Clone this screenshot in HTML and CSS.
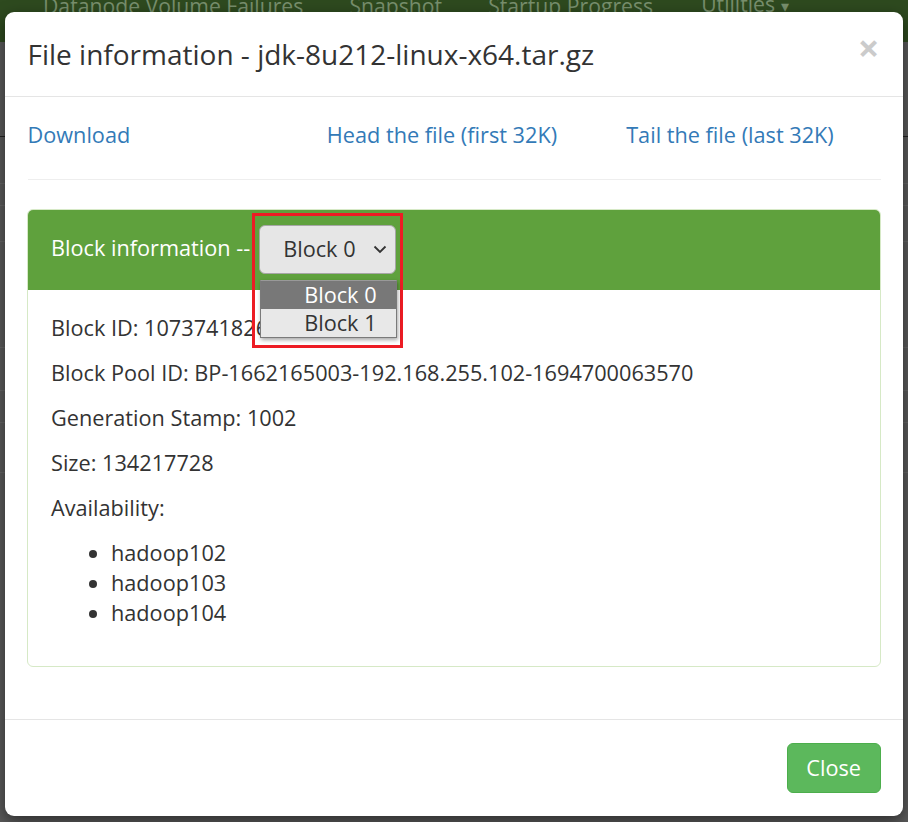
FILE: index.html
```html
<!DOCTYPE html>
<html lang="en">
<head>
<meta charset="utf-8">
<title>File information</title>
<link rel="stylesheet" href="styles.css">
</head>
<body>
<div class="page">
  <nav class="navbar">
    <span class="nav-item nav-first">Datanode Volume Failures</span>
    <span class="nav-item nav-snap">Snapshot</span>
    <span class="nav-item nav-startup">Startup Progress</span>
    <span class="nav-item nav-util">Utilities <span class="caret">▾</span></span>
  </nav>
  <div class="page-body">
    <div class="bg-row r1"></div>
    <div class="bg-row r2"></div>
    <div class="bg-row r3"></div>
    <div class="bg-row r4"></div>
    <div class="bg-row r5"></div>
    <div class="bg-row r6"></div>
    <div class="bg-row r7"></div>
    <div class="bg-row r8"></div>
  </div>
</div>

<div class="modal">
  <div class="modal-header">
    <h4 class="modal-title">File information - jdk-8u212-linux-x64.tar.gz</h4>
    <span class="close">×</span>
  </div>
  <div class="modal-body">
    <div class="links">
      <a class="link">Download</a>
      <a class="link">Head the file (first 32K)</a>
      <a class="link">Tail the file (last 32K)</a>
    </div>
    <hr class="divider">
    <div class="panel">
      <div class="panel-heading">
        <span class="heading-text">Block information --</span>
        <div class="select-wrap">
          <div class="select">
            <span>Block 0</span>
            <svg class="chev" width="14" height="9" viewBox="0 0 14 9"><path d="M1.5 1.5 L7 7 L12.5 1.5" fill="none" stroke="#333" stroke-width="1.8"/></svg>
          </div>
          <div class="options">
            <div class="option selected">Block 0</div>
            <div class="option">Block 1</div>
          </div>
        </div>
      </div>
      <div class="panel-body">
        <p>Block ID: 1073741826</p>
        <p>Block Pool ID: BP-1662165003-192.168.255.102-1694700063570</p>
        <p>Generation Stamp: 1002</p>
        <p>Size: 134217728</p>
        <p>Availability:</p>
        <ul class="hosts">
          <li>hadoop102</li>
          <li>hadoop103</li>
          <li>hadoop104</li>
        </ul>
      </div>
    </div>
  </div>
  <div class="modal-footer">
    <button class="btn-close">Close</button>
  </div>
</div>
<div class="annotation"></div>
</body>
</html>
```

FILE: styles.css
```css
* { box-sizing: border-box; }
html, body { margin: 0; padding: 0; }
body {
  width: 908px;
  height: 822px;
  overflow: hidden;
  background: #5a5a5a;
  font-family: "Open Sans", "Noto Sans", sans-serif;
  color: #333;
  position: relative;
}
.page { width: 908px; height: 822px; }
.navbar {
  height: 42px;
  background: #2e4a1f;
  display: flex;
  align-items: flex-end;
  font-size: 21.2px;
  line-height: 30px;
  color: #788f6d;
  overflow: hidden;
}
.nav-item { display: block; margin-bottom: 21px; white-space: nowrap; }
.nav-first { margin-left: 43px; }
.nav-snap { margin-left: 46px; }
.nav-startup { margin-left: 46px; }
.nav-util { margin-left: 48px; }
.caret { font-size: 16px; }
.page-body { display: flex; flex-direction: column; }
.bg-row { border-bottom: 1px solid #666; }
.r1 { height: 95px; border-bottom-color: #222; }
.r2 { height: 47px; }
.r3 { height: 22px; }
.r4 { height: 36px; }
.r5 { height: 106px; }
.r6 { height: 43px; }
.r7 { height: 32px; }
.r8 { height: 50px; }

.modal {
  position: absolute;
  top: 12px;
  left: 5px;
  width: 898px;
  background: #fff;
  border-radius: 9px;
  box-shadow: 0 5px 15px rgba(0,0,0,0.5);
}
.modal-header {
  display: flex;
  justify-content: space-between;
  align-items: flex-start;
  padding: 23px 22.5px 22px;
  border-bottom: 1.5px solid #e5e5e5;
}
.modal-title {
  margin: 0;
  font-size: 28px;
  line-height: 39px;
  font-weight: 400;
  color: #333;
}
.close {
  font-size: 38px;
  font-weight: 700;
  line-height: 30px;
  color: #000;
  opacity: 0.2;
  margin-top: -3px;
  margin-right: 1px;
}
.modal-body { padding: 22.5px; }
.links {
  display: grid;
  grid-template-columns: repeat(3, 1fr);
  margin: 0 -22.5px;
  font-size: 21.7px;
  line-height: 30px;
}
.link { padding: 0 22.5px; color: #337ab7; text-decoration: none; }
.divider {
  border: 0;
  border-top: 1.5px solid #eee;
  margin: 29px 0 29.5px;
}
.panel {
  border: 1.5px solid #d6e9c6;
  border-radius: 6px;
  margin-bottom: 30px;
  margin-left: -1px;
  font-size: 21.7px;
  line-height: 30px;
}
.panel-heading {
  background: #5fa13d;
  color: #fff;
  padding: 14.5px 22.5px 16px 23.5px;
  border-radius: 5px 5px 0 0;
  display: flex;
  align-items: center;
}
.heading-text { margin-top: -3px; }
.select-wrap { position: relative; margin-left: 9px; }
.select {
  width: 137px;
  height: 49px;
  background: #e6e6e6;
  border: 1px solid #a6a6a6;
  border-radius: 6px;
  color: #333;
  display: flex;
  align-items: center;
  padding-left: 23px;
  padding-right: 6px;
  justify-content: space-between;
}
.chev { margin-right: 2px; }
.options {
  position: absolute;
  top: 55px;
  left: 1px;
  width: 137px;
  background: #e8e8e8;
  border: 1px solid #7a7a7a;
  border-top-color: #999;
  box-shadow: 1px 2px 4px rgba(0,0,0,0.35);
  color: #333;
  z-index: 2;
}
.option { height: 28px; line-height: 28px; padding-left: 43px; }
.option.selected { background: #787878; color: #fff; }
.panel-body { padding: 23px 22.5px 23px 23.5px; }
.panel-body p { margin: 0 0 15px; }
.hosts { margin: 0 0 15px; padding-left: 60px; }
.modal-footer {
  border-top: 1.5px solid #e5e5e5;
  padding: 22.5px 22.5px 23.5px;
  display: flex;
  justify-content: flex-end;
}
.btn-close {
  font-family: inherit;
  font-size: 21.7px;
  line-height: 30px;
  padding: 9px 18.5px;
  color: #fff;
  background: #5cb85c;
  border: 1.5px solid #4cae4c;
  border-radius: 6px;
}
.annotation {
  position: absolute;
  left: 252px;
  top: 213px;
  width: 151px;
  height: 135px;
  border: 3px solid #ed1c24;
  pointer-events: none;
}
```
